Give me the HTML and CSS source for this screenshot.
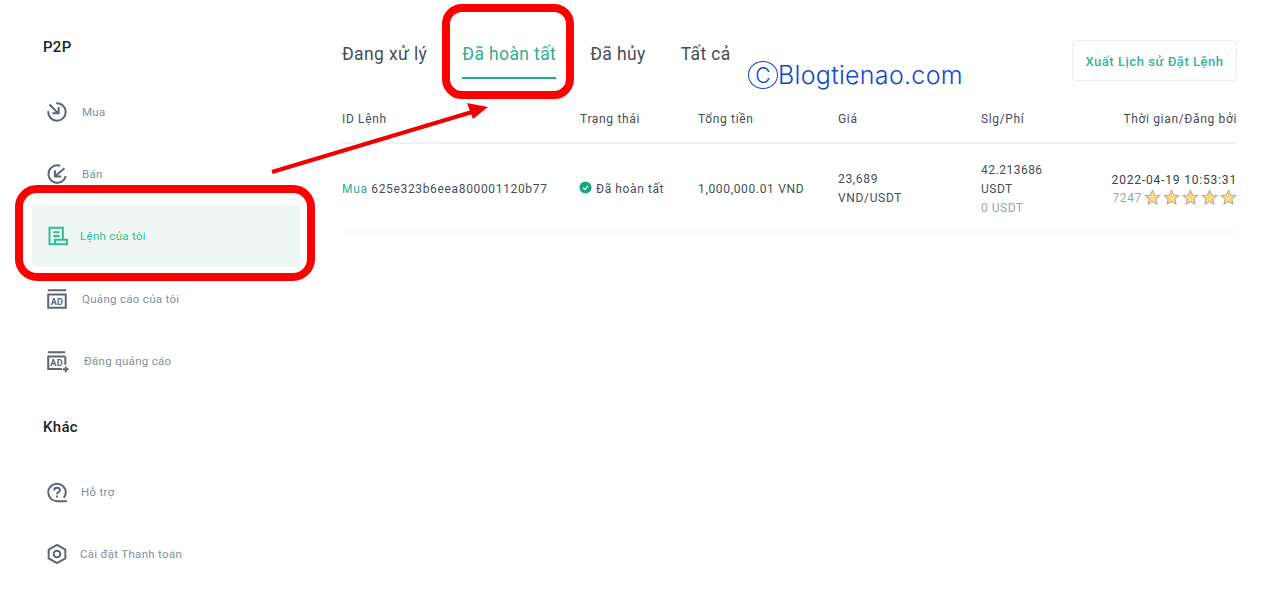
FILE: index.html
```html
<!DOCTYPE html>
<html lang="vi">
<head>
<meta charset="utf-8">
<title>Lệnh của tôi</title>
<link rel="stylesheet" href="styles.css">
</head>
<body>
<div class="page">
  <aside class="sidebar">
    <h2 class="side-title">P2P</h2>
    <nav class="side-group">
      <a class="side-item"><svg class="ico" viewBox="0 0 24 24"><path d="M11 1.500A10.500 10.500 0 1 1 1.500 11"/><path d="M3 3l10 10M14 6v7.500H6.500"/></svg><span>Mua</span></a>
      <a class="side-item"><svg class="ico" viewBox="0 0 24 24"><path d="M16 2.300A10.500 10.500 0 1 0 22.500 14.500"/><path d="M21 5L10 14.500M9.500 7.500v7.500H17"/></svg><span>Bán</span></a>
      <a class="side-item active"><svg class="ico ico-my" viewBox="0 0 24 24"><path d="M19 16.500V2H3v20h21v-5.500H9.500V22"/><path d="M7.500 7.500h7.500M7.500 12h7.500"/></svg><span class="lbl-my">Lệnh của tôi</span></a>
      <a class="side-item"><svg class="ico" viewBox="0 0 24 24"><path d="M1 1.500h22M1.500 6.500h21v16h-21z"/><text x="12" y="19" class="ad">AD</text></svg><span>Quảng cáo của tôi</span></a>
      <a class="side-item"><svg class="ico" viewBox="0 0 24 24"><path d="M1 1.500h21M22 6.500v10M18 21.500H1.500v-15H22"/><path d="M22.500 18.500v7M19 22h7"/><text x="11.500" y="18" class="ad">AD</text></svg><span class="lbl-post">Đăng quảng cáo</span></a>
    </nav>
    <h2 class="side-title other">Khác</h2>
    <nav class="side-group">
      <a class="side-item"><svg class="ico" viewBox="0 0 24 24"><path d="M24 23H12A10.500 10.500 0 1 1 22.500 12.500c0 2.500-1 4.800-2.500 6.500"/><path d="M8.500 10C8.700 7.800 10.300 7 12 7c2.200 0 3.500 1.300 3.500 2.900 0 2.500-3.500 2.400-3.500 4.900"/><path d="M12 16.200v2.300"/></svg><span class="lbl-help">Hỗ trợ</span></a>
      <a class="side-item"><svg class="ico" viewBox="0 0 24 24"><path d="M12 1l10 5.700v10.600L12 23 2 17.300V6.700z"/><circle cx="12" cy="12" r="4"/></svg><span class="lbl-my">Cài đặt Thanh toán</span></a>
    </nav>
  </aside>

  <main class="content">
    <header class="top">
      <div class="tabs">
        <a class="tab tab-1">Đang xử lý</a>
        <a class="tab tab-2 current">Đã hoàn tất</a>
        <a class="tab tab-3">Đã hủy</a>
        <a class="tab">Tất cả</a>
      </div>
      <button class="export">Xuất Lịch sử Đặt Lệnh</button>
    </header>

    <div class="grid head">
      <div>ID Lệnh</div>
      <div>Trạng thái</div>
      <div>Tổng tiền</div>
      <div>Giá</div>
      <div>Slg/Phí</div>
      <div class="right">Thời gian/Đăng bởi</div>
    </div>
    <div class="grid row">
      <div><span class="buy">Mua</span> 625e323b6eea800001120b77</div>
      <div class="status"><svg class="check" viewBox="0 0 14 14"><circle cx="7" cy="7" r="6.500"/><path d="M4.200 7.200l2 2 3.600-4"/></svg>Đã hoàn tất</div>
      <div>1,000,000.01 VND</div>
      <div class="stack tight"><span>23,689</span><span>VND/USDT</span></div>
      <div class="stack amount"><span>42.213686</span><span>USDT</span><span class="muted">0 USDT</span></div>
      <div class="right when">
        <span class="date">2022-04-19 10:53:31</span>
        <span class="rating"><span class="muted">7247</span>
          <svg class="star" viewBox="0 0 24 24"><path d="M12 2l3 6.600 7.200.8-5.300 4.900 1.400 7.100L12 17.800l-6.300 3.600 1.400-7.100L1.800 9.400 9 8.600z"/></svg>
          <svg class="star" viewBox="0 0 24 24"><path d="M12 2l3 6.600 7.200.8-5.300 4.900 1.400 7.100L12 17.800l-6.300 3.600 1.400-7.100L1.800 9.400 9 8.600z"/></svg>
          <svg class="star" viewBox="0 0 24 24"><path d="M12 2l3 6.600 7.200.8-5.300 4.900 1.400 7.100L12 17.800l-6.300 3.600 1.400-7.100L1.800 9.400 9 8.600z"/></svg>
          <svg class="star" viewBox="0 0 24 24"><path d="M12 2l3 6.600 7.200.8-5.300 4.900 1.400 7.100L12 17.800l-6.300 3.600 1.400-7.100L1.800 9.400 9 8.600z"/></svg>
          <svg class="star" viewBox="0 0 24 24"><path d="M12 2l3 6.600 7.200.8-5.300 4.900 1.400 7.100L12 17.800l-6.300 3.600 1.400-7.100L1.800 9.400 9 8.600z"/></svg>
        </span>
      </div>
    </div>
  </main>

  <div class="mark mark-side"></div>
  <div class="mark mark-tab"></div>
  <svg class="arrow" viewBox="0 0 1280 602"><path class="shaft" d="M272 172L472 112"/><path class="head-tip" d="M488 107L467 103L473 119z"/></svg>
  <div class="watermark"><span class="copy">C</span>Blogtienao.com</div>
</div>
</body>
</html>
```

FILE: styles.css
```css
* { box-sizing: border-box; }
html, body { margin: 0; padding: 0; background: #fff; }
body { font-family: Roboto, "Liberation Sans", sans-serif; color: #474d57; }
.page { position: relative; width: 1280px; height: 602px; overflow: hidden; display: flex; }

.sidebar { width: 342px; padding: 37px 0 0 32px; flex: none; }
.side-title { margin: 0; padding-left: 11px; height: 20px; font-size: 15px; line-height: 20px; font-weight: 500; letter-spacing: .3px; color: #1e2329; }
.side-title.other { margin-top: 25.500px; }
.side-group { display: flex; flex-direction: column; width: 268px; margin-top: 23.500px; }
.side-item { height: 62.300px; display: flex; align-items: center; gap: 15px; padding-left: 15px; border-radius: 4px; font-size: 11.500px; letter-spacing: .3px; color: #848e9c; }
.side-item.active { background: #eef7f4; color: #2ebd95; }
.ico { width: 20px; height: 20px; flex: none; fill: none; stroke: #5e6673; stroke-width: 2.400; overflow: visible; }
.ico-my { stroke: #2ebd95; }
.ad { font: 700 11px Roboto, sans-serif; fill: #5e6673; stroke: none; text-anchor: middle; }
.lbl-my { margin-left: -2px; }
.lbl-post { margin-left: 2px; }
.lbl-help { margin-left: -1px; }

.content { width: 895px; flex: none; }
.top { height: 98px; display: flex; justify-content: space-between; align-items: flex-start; padding-top: 40px; }
.tabs { display: flex; }
.tab { height: 39px; padding-top: 1px; font-size: 17.500px; line-height: 26px; letter-spacing: .38px; color: #474d57; }
.tab-1 { margin-right: 35px; }
.tab-2 { margin-right: 34px; }
.tab-3 { margin-right: 35px; }
.tab.current { color: #2fae8f; border-bottom: 2px solid #20ab8a; }
.export { width: 165px; height: 41px; padding: 1px 0 0; border: 1px solid #eaecef; border-radius: 4px; background: #fff; font: 500 13px Roboto, sans-serif; letter-spacing: .53px; color: #35b597; }

.grid { display: grid; grid-template-columns: 238px 118px 140px 143px 1fr 170px; font-size: 12px; letter-spacing: .66px; }
.grid.head { height: 46px; border-bottom: 2px solid #eef1f5; align-items: center; color: #474d57; padding-bottom: 2px; }
.grid.row { height: 89px; padding-top: 2px; border-bottom: 2px solid #f5f6f8; align-items: center; }
.right { text-align: right; }
.buy { color: #2fae8f; }
.status { display: flex; align-items: center; gap: 4px; letter-spacing: .6px; }
.check { width: 13px; height: 13px; flex: none; margin-top: -2px; margin-left: -1px; }
.check circle { fill: #1aa383; }
.check path { fill: none; stroke: #fff; stroke-width: 1.300; }
.stack { display: flex; flex-direction: column; line-height: 19px; }
.stack.tight { line-height: 18.500px; }
.stack.amount { margin-top: 2px; letter-spacing: .5px; }
.muted { color: #9aa5b1; }
.when { display: flex; flex-direction: column; align-items: flex-end; gap: 0; line-height: 18px; }
.date { color: #3a404a; letter-spacing: .82px; }
.rating { display: flex; align-items: center; gap: 2px; }
.star { width: 17px; height: 17px; fill: #fbd98a; stroke: #b9ae92; stroke-width: 1.500; }

.mark { position: absolute; border: 8px solid #fe0000; }
.mark-side { left: 15px; top: 185px; width: 300px; height: 96px; border-radius: 22px; }
.mark-tab { left: 442px; top: 4px; width: 132px; height: 95px; border-radius: 20px; }
.arrow { position: absolute; left: 0; top: 0; width: 1280px; height: 602px; pointer-events: none; }
.shaft { stroke: #f00000; stroke-width: 4; fill: none; }
.head-tip { fill: #f00000; }
.watermark { position: absolute; left: 748px; top: 60px; display: flex; align-items: center; height: 30px; font: 300 25px/30px Inter, sans-serif; letter-spacing: .3px; color: #1048d0; }
.copy { width: 30px; height: 28px; border: 1px solid #1048d0; border-radius: 50%; display: flex; align-items: center; justify-content: center; font-size: 21px; line-height: 1; }
```
